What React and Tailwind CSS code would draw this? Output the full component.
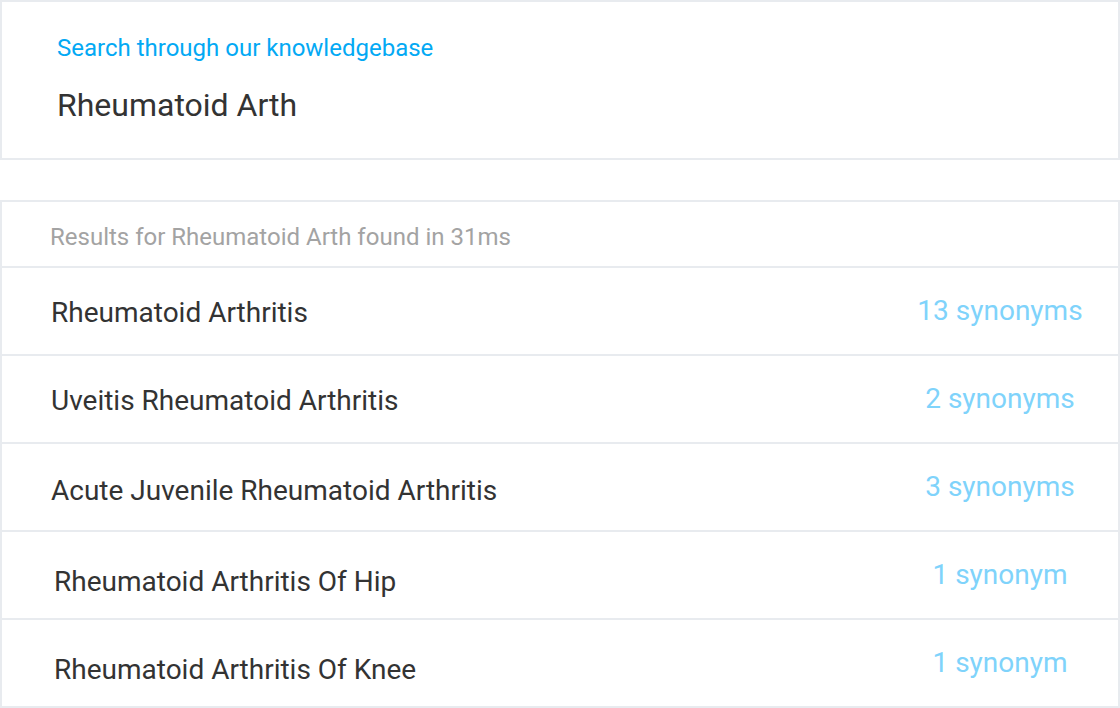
const results = [
  { name: 'Rheumatoid Arthritis', count: '13 synonyms', pad: 'pl-[49px] pt-[4px]' },
  { name: 'Uveitis Rheumatoid Arthritis', count: '2 synonyms', pad: 'pl-[49px] pt-[4px]' },
  { name: 'Acute Juvenile Rheumatoid Arthritis', count: '3 synonyms', pad: 'pl-[49px] pt-[8px]' },
  { name: 'Rheumatoid Arthritis Of Hip', count: '1 synonym', pad: 'pl-[52px] pt-[14px]' },
  { name: 'Rheumatoid Arthritis Of Knee', count: '1 synonym', pad: 'pl-[52px] pt-[14px]' },
]

export default function App() {
  return (
    <div className="w-[1120px] h-[708px] overflow-hidden bg-white font-['Roboto','Liberation_Sans',sans-serif]">
      {/* Search box */}
      <div className="h-[160px] border-2 border-[#e8ebef] pl-[55px] pt-[30px]">
        <p className="text-[24px] leading-[32px] text-[#03a9f4]">Search through our knowledgebase</p>
        <p className="mt-[21px] text-[32px] leading-[40px] text-[#333333]">Rheumatoid Arth</p>
      </div>

      {/* Results */}
      <div className="mt-[40px] border-2 border-[#e8ebef]">
        <div className="h-[66px] flex items-center pl-[48px] pt-[6px] border-b-2 border-[#e8ebef]">
          <span className="text-[24px] text-[#a3a3a3]">Results for Rheumatoid Arth found in 31ms</span>
        </div>
        {results.map((r, i) => (
          <div key={i} className="h-[88px] flex items-center border-b-2 border-[#e8ebef]">
            <div className={`flex-1 text-[28px] text-[#333333] ${r.pad}`}>{r.name}</div>
            <div className="w-[200px] mr-[18px] text-center text-[28px] text-[#7fd3fb]">{r.count}</div>
          </div>
        ))}
      </div>
    </div>
  )
}
